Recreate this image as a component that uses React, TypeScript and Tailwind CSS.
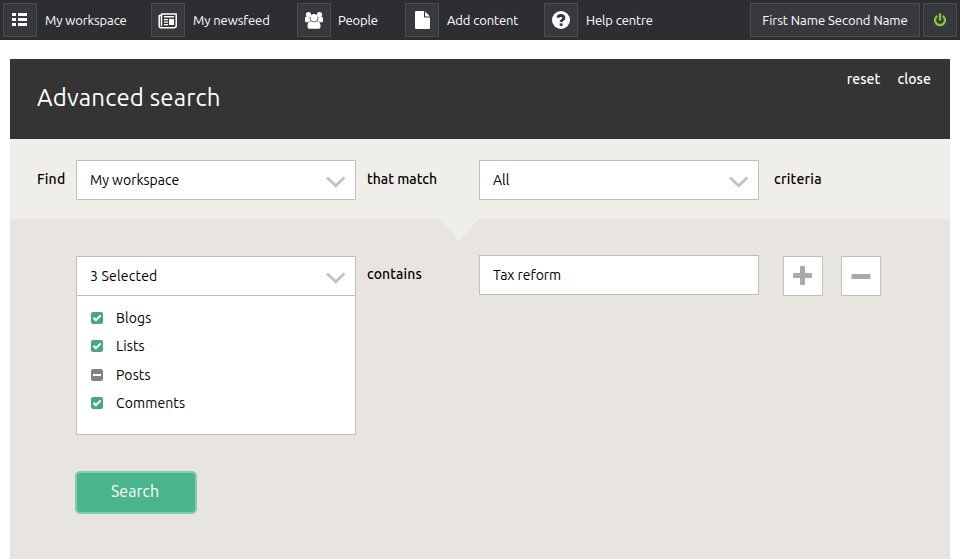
import React from 'react';

const ListIcon = () => (
  <svg width="34" height="34" viewBox="0 0 34 34" fill="#fff" className="-m-px shrink-0">
    <path d="M9 10h4v3H9zM15 10h9v3h-9zM9 15h4v3H9zM15 15h9v3h-9zM9 20h4v3H9zM15 20h9v3h-9z" />
  </svg>
);

const NewsIcon = () => (
  <svg width="34" height="34" viewBox="0 0 34 34" fill="none" className="-m-px shrink-0">
    <path d="M10.500 12.500H8.200v10c0 1.500.8 2.300 1.800 2.300h13c1.400 0 2.200-.6 2.200-2V11H10.500v12" stroke="#fff" strokeWidth="1.500" strokeLinejoin="round" />
    <path d="M13 13h10v1.500H13zM13 16h4v1.200h-4zM13 18.500h4v1.200h-4zM13 21h4v1.200h-4zM18 16h5v6h-5z" fill="#fff" />
  </svg>
);

const PeopleIcon = () => (
  <svg width="34" height="34" viewBox="0 0 34 34" fill="#fff" className="-m-px shrink-0">
    <circle cx="11.500" cy="11.600" r="2.600" />
    <circle cx="22.500" cy="11.600" r="2.600" />
    <path d="M8 18.500v-2.700c0-1.500.8-2.300 1.900-2.300.6.600 2 .9 3 .4-.5 2 .1 3.200.8 4.100-.9 0-1.700.4-2.300 1.200H9c-.6 0-1-.2-1-.7zM26 18.500v-2.700c0-1.500-.8-2.300-1.900-2.300-.6.600-2 .9-3 .4.500 2-.1 3.200-.8 4.100.9 0 1.700.4 2.300 1.200H25c.6 0 1-.2 1-.7z" />
    <circle cx="17" cy="14.800" r="3.700" />
    <path d="M14 18.200c2 1.500 4 1.500 6 0 2.300 0 3.600 2 3.600 5 0 1.600-.9 2.600-2.400 2.600h-8.400c-1.500 0-2.400-1-2.400-2.600 0-3 1.300-5 3.600-5z" />
  </svg>
);

const FileIcon = () => (
  <svg width="34" height="34" viewBox="0 0 34 34" fill="#fff" className="-m-px shrink-0">
    <path d="M11 8h8v6.500h6V25a1 1 0 0 1-1 1H11a1 1 0 0 1-1-1V9a1 1 0 0 1 1-1z" />
    <path d="M20.200 8.300l4.700 5.100h-4.700z" />
  </svg>
);

const HelpIcon = () => (
  <svg width="34" height="34" viewBox="0 0 34 34" className="-m-px shrink-0">
    <circle cx="17" cy="17" r="9" fill="#fff" />
    <path d="M13.800 14.700c.4-1.500 1.500-2.200 3.100-2.200 1.700 0 3 .9 3 2.400 0 2-2.800 2-2.800 4.200" fill="none" stroke="#38393d" strokeWidth="2.900" />
    <path d="M15.700 20.300h2.900v2.600h-2.900z" fill="#38393d" />
  </svg>
);

const PowerIcon = () => (
  <svg width="34" height="34" viewBox="0 0 34 34" fill="none" stroke="#8ac43f" strokeWidth="2.300" strokeLinecap="round" className="-m-px shrink-0">
    <path d="M13.600 13.500a5 5 0 1 0 6.800 0M17 11.200v5.500" />
  </svg>
);

const Chevron = () => (
  <svg width="20" height="12" viewBox="0 0 20 12" fill="none" stroke="#c2c2c2" strokeWidth="2.800" className="mt-[3px]">
    <path d="M1 1.500l8.700 8.300 8.700-8.300" />
  </svg>
);

const navItems = [
  { label: 'My workspace', icon: <ListIcon />, width: 'w-[148px]', text: 'ml-[8px] mt-px tracking-[-0.1px]' },
  { label: 'My newsfeed', icon: <NewsIcon />, width: 'w-[146px]', text: 'ml-[8px] mt-px tracking-[-0.1px]' },
  { label: 'People', icon: <PeopleIcon />, width: 'w-[108px]', text: 'ml-[7px] mt-px tracking-[-0.1px]' },
  { label: 'Add content', icon: <FileIcon />, width: 'w-[139px]', text: 'ml-[8px] mt-px tracking-[-0.1px]' },
  { label: 'Help centre', icon: <HelpIcon />, width: 'w-[206px]', text: 'ml-[8px] mt-px tracking-[-0.1px]' },
];

const options = [
  { label: 'Blogs', checked: true, height: 'h-7' },
  { label: 'Lists', checked: true, height: 'h-7' },
  { label: 'Posts', checked: false, height: 'h-[29px]' },
  { label: 'Comments', checked: true, height: 'h-7' },
];

const navBox = 'flex h-[34px] shrink-0 items-center justify-center border border-[#4b4c50] bg-[#38393d]';
const field = 'flex h-10 w-[280px] shrink-0 items-center justify-between border border-[#bfbfbf] bg-white pl-[13px] pr-[9px] text-sm';
const label = 'text-sm font-medium leading-5';

const CheckMark = ({ checked }: { checked: boolean }) => (
  <svg width="12" height="12" viewBox="0 0 12 12" className="shrink-0">
    <rect width="12" height="12" rx="2" fill={checked ? '#47a780' : '#828282'} />
    <path d={checked ? 'M2.500 5.800l2.400 2.500 4.800-4.900' : 'M2 6h8'} fill="none" stroke="#fff" strokeWidth="2" />
  </svg>
);

export default function App() {
  return (
    <div className="h-[559px] w-[960px] overflow-hidden bg-white font-['Ubuntu','Noto_Sans',sans-serif] text-black">
      <nav className="flex h-10 items-start bg-[#2d2e32] pl-[3px] pt-[3px] text-[13px] text-white">
        {navItems.map((item) => (
          <a key={item.label} className={`flex shrink-0 items-center whitespace-nowrap ${item.width}`}>
            <span className={`w-[34px] ${navBox}`}>{item.icon}</span>
            <span className={item.text}>{item.label}</span>
          </a>
        ))}
        <span className={`w-[170px] whitespace-nowrap pt-px tracking-[-0.03px] ${navBox}`}>First Name Second Name</span>
        <span className={`ml-[3px] w-[34px] ${navBox}`}><PowerIcon /></span>
      </nav>

      <main className="mx-[10px] mt-[19px]">
        <header className="flex h-20 items-start justify-between bg-[#343434] pl-[27px] pr-[19px] text-white">
          <h1 className="mt-[23px] text-2xl leading-8 tracking-[0.17px]">Advanced search</h1>
          <div className="mt-[10px] flex gap-[17px] text-sm font-medium leading-5 tracking-[0.1px]">
            <span>reset</span>
            <span>close</span>
          </div>
        </header>

        <section className="flex h-20 items-start bg-[#efeee9] pl-[27px] pt-[21px]">
          <span className={`mt-[9px] w-[39px] tracking-[0.2px] ${label}`}>Find</span>
          <div className={field}><span>My workspace</span><Chevron /></div>
          <span className={`ml-[11px] mt-[9px] w-28 ${label}`}>that match</span>
          <div className={field}><span>All</span><Chevron /></div>
          <span className={`ml-[15px] mt-[9px] tracking-[0.25px] ${label}`}>criteria</span>
        </section>

        <section className="relative h-[340px] bg-[#e8e5e1] pl-[66px] pt-9">
          <svg className="absolute left-[429px] top-0" width="40" height="22" viewBox="0 0 40 22">
            <path d="M0 0h40L20 21.500z" fill="#efeee9" />
          </svg>
          <div className="flex items-start">
            <div className="mt-px h-[179px] w-[280px] shrink-0 border border-[#bfbfbf] bg-white text-sm">
              <div className="flex h-[39px] items-center justify-between border-b border-[#bfbfbf] pl-[13px] pr-[9px]">
                <span className="tracking-[0.2px]">3 Selected</span><Chevron />
              </div>
              <ul className="pl-[14px] pt-2 tracking-[0.12px]">
                {options.map((option) => (
                  <li key={option.label} className={`flex items-center gap-[13px] ${option.height}`}>
                    <CheckMark checked={option.checked} />
                    <span>{option.label}</span>
                  </li>
                ))}
              </ul>
            </div>
            <span className={`ml-[11px] mt-[9px] w-28 tracking-[0.12px] ${label}`}>contains</span>
            <div className={`tracking-[-0.05px] ${field}`}>Tax reform</div>
            <button className="ml-6 mt-px flex size-10 items-center justify-center border border-[#bfbfbf] bg-white">
              <svg width="20" height="20" viewBox="0 0 20 20" fill="#a9a9a9">
                <rect x="0" y="7" width="19" height="5" rx="1" /><rect x="7" y="0" width="5" height="19" rx="1" />
              </svg>
            </button>
            <button className="ml-[18px] mt-px flex size-10 items-center justify-center border border-[#bfbfbf] bg-white">
              <svg width="20" height="20" viewBox="0 0 20 20" fill="#a9a9a9"><rect x="0.500" y="8" width="19" height="5" rx="1" /></svg>
            </button>
          </div>
          <button className="-ml-px mt-9 flex h-[43px] w-[122px] items-center justify-center rounded-[5px] border-2 border-[#83cbaa] bg-[#4bb68d] pb-1 pr-0.5 text-base text-white">
            Search
          </button>
        </section>
      </main>
    </div>
  );
}
